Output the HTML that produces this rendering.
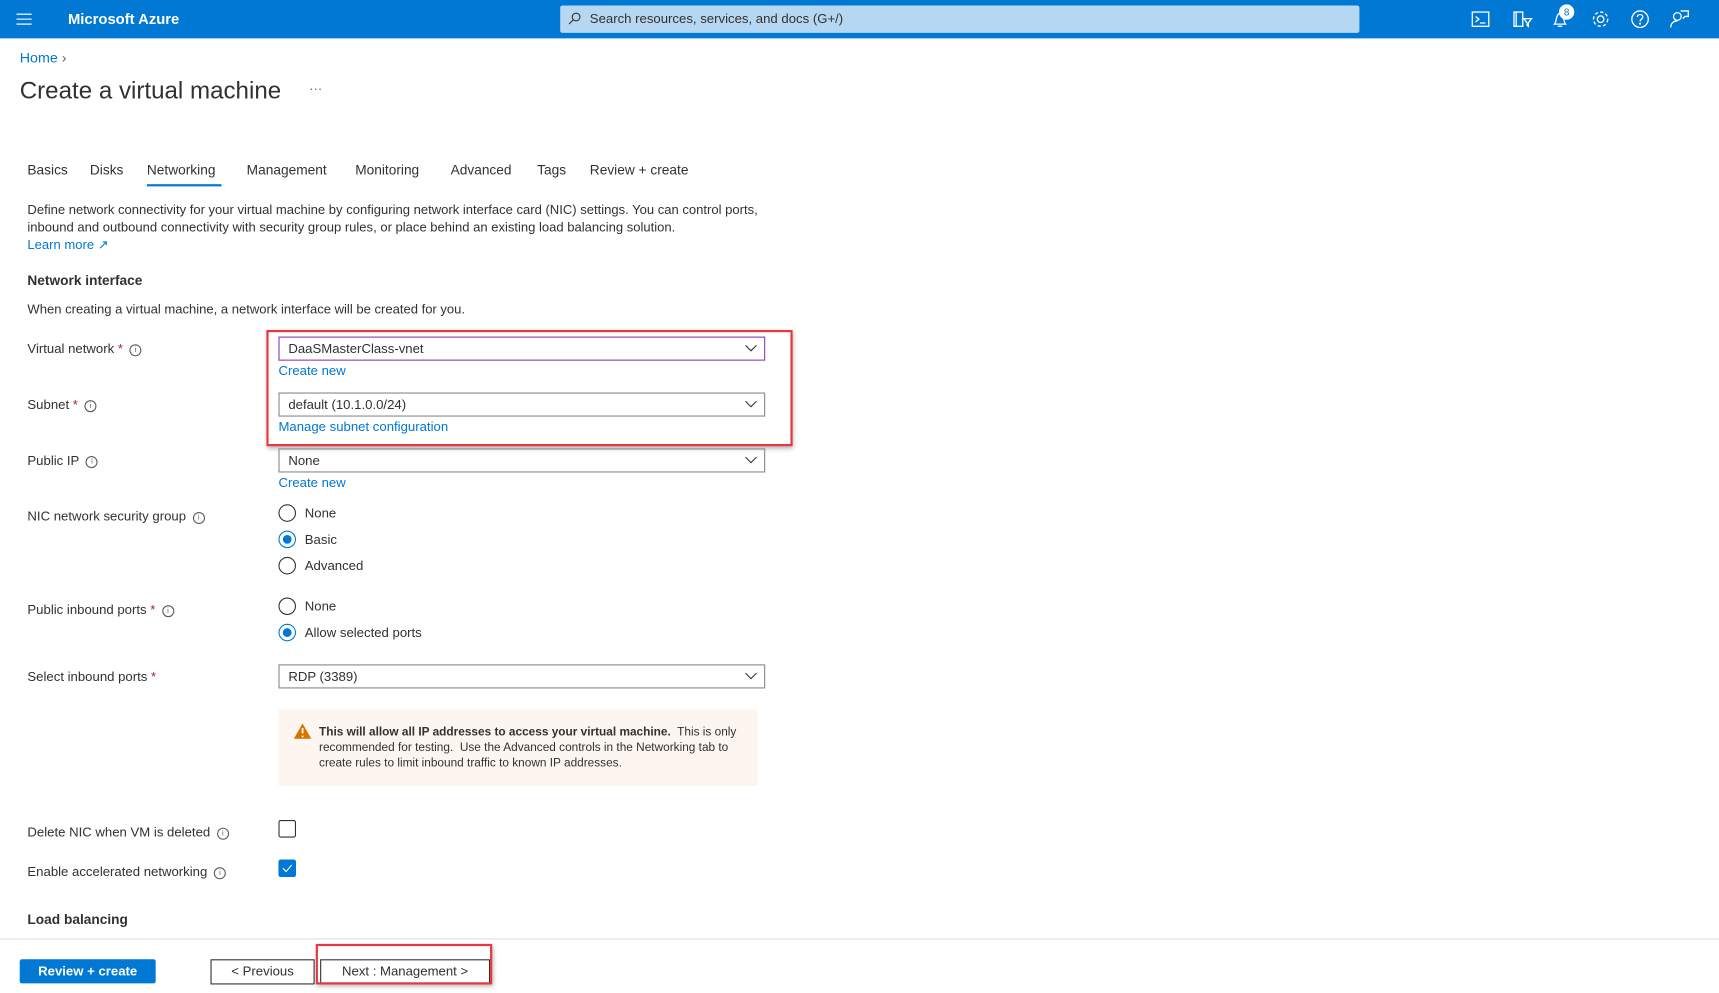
<!DOCTYPE html>
<html><head><meta charset="utf-8"><style>
html,body{margin:0;padding:0;width:1719px;height:993px;overflow:hidden;background:#fff}
#w{position:absolute;left:0;top:0;width:1568px;height:906px;transform:scale(1.0963);transform-origin:0 0;font-family:"Liberation Sans",sans-serif;color:#323130}
.a{position:absolute;white-space:nowrap}
.lbl{font-size:12px}
.lnk{color:#0078d4;font-size:12px}
.dd{position:absolute;left:254px;width:442px;height:20px;border:1px solid #8a8886;font-size:12px;line-height:20px;box-sizing:content-box}
.dd span{position:absolute;left:8px}
.dd svg{position:absolute;right:6px;top:6px}
.rad{position:absolute;left:254px;width:14px;height:14px;border:1px solid #323130;border-radius:50%}
.rad.on{border-color:#0078d4}
.rad.on::after{content:"";position:absolute;left:3px;top:3px;width:8px;height:8px;border-radius:50%;background:#0078d4}
.info{display:inline-block;width:9px;height:9px;border:1px solid #605e5c;border-radius:50%;font-size:7px;line-height:9px;text-align:center;color:#605e5c;vertical-align:1px;margin-left:6px}
.req{color:#a4262c}
</style></head><body><div id="w">
<div class="a" style="left:0;top:0;width:1568px;height:35px;background:#0078d4"></div>
<svg class="a" style="left:15px;top:12px" width="14" height="11"><path d="M0 1h14M0 5.5h14M0 10h14" stroke="#cfe4f7" stroke-width="1.3"/></svg>
<div class="a" style="left:62px;top:10px;color:#fff;font-size:13.5px;font-weight:bold">Microsoft Azure</div>
<div class="a" style="left:511px;top:5px;width:729px;height:25px;background:#b6d7f2;border-radius:2px"></div>
<svg class="a" style="left:518px;top:11px" width="12" height="12"><circle cx="7.5" cy="4.5" r="3.5" fill="none" stroke="#323130"/><path d="M5 7L1 11" stroke="#323130"/></svg>
<div class="a" style="left:538px;top:10px;font-size:12px;color:#323130">Search resources, services, and docs (G+/)</div>
<svg class="a" style="left:1340px;top:6px" width="210" height="24" fill="none" stroke="#fff" stroke-width="1.2">
<rect x="3" y="5" width="15" height="13"/><path d="M6 9l3 2.5-3 2.5M10 15h5"/>
<path d="M41 5h8v13h-8zM43 5v13M50 11h7l-3 4v3l-1-1v-2z"/>
<path d="M78 16c2-2 1-9 5-10 4 1 3 8 5 10zM81 18h4"/>
<circle cx="120" cy="11.5" r="3"/><circle cx="120" cy="11.5" r="6.5" stroke-dasharray="3 2"/>
<circle cx="156" cy="11.5" r="7.5"/><path d="M153.5 9.5c0-3 5-3 5 0 0 2-2.5 2-2.5 4"/><circle cx="156" cy="15.5" r=".4"/>
<circle cx="190" cy="9" r="3.5"/><path d="M184 19c0-4 3-6 6-6M193 4h7v5h-3l-2 2"/>
</svg>
<div class="a" style="left:1422px;top:4px;width:14px;height:14px;border-radius:50%;background:#fff;color:#0078d4;font-size:9px;text-align:center;line-height:14px">8</div>
<div class="a lnk" style="left:18px;top:45px;font-size:13px">Home <span style="color:#605e5c">&#8250;</span></div>
<div class="a" style="left:18px;top:70px;font-size:22px">Create a virtual machine</div>
<div class="a" style="left:282px;top:74px;font-size:12px;color:#605e5c">···</div>
<div class="a" style="left:25px;top:148px;font-size:12.5px">
<span style="position:absolute;left:0">Basics</span><span style="position:absolute;left:57px">Disks</span><span style="position:absolute;left:109px">Networking</span><span style="position:absolute;left:200px">Management</span><span style="position:absolute;left:299px">Monitoring</span><span style="position:absolute;left:386px">Advanced</span><span style="position:absolute;left:465px">Tags</span><span style="position:absolute;left:513px">Review + create</span></div>
<div class="a" style="left:134px;top:168px;width:68px;height:2px;background:#0078d4"></div>
<div class="a lbl" style="left:25px;top:183px;font-size:11.9px;line-height:16px">Define network connectivity for your virtual machine by configuring network interface card (NIC) settings. You can control ports,<br>inbound and outbound connectivity with security group rules, or place behind an existing load balancing solution.<br><span style="color:#0078d4">Learn more &#8599;</span></div>
<div class="a" style="left:25px;top:249px;font-size:12.5px;font-weight:bold">Network interface</div>
<div class="a lbl" style="left:25px;top:275px;font-size:11.9px">When creating a virtual machine, a network interface will be created for you.</div>

<div class="a lbl" style="left:25px;top:311px">Virtual network <span class="req">*</span><span class="info">i</span></div>
<div class="dd" style="top:307px;border-color:#8a3ab9"><span>DaaSMasterClass-vnet</span><svg width="12" height="8"><path d="M1 1l5 5 5-5" fill="none" stroke="#323130"/></svg></div>
<div class="a lnk" style="left:254px;top:331px">Create new</div>
<div class="a lbl" style="left:25px;top:362px">Subnet <span class="req">*</span><span class="info">i</span></div>
<div class="dd" style="top:358px"><span>default (10.1.0.0/24)</span><svg width="12" height="8"><path d="M1 1l5 5 5-5" fill="none" stroke="#323130"/></svg></div>
<div class="a lnk" style="left:254px;top:382px">Manage subnet configuration</div>
<div class="a" style="left:243px;top:301px;width:476px;height:102px;border:2px solid #e8383d;box-shadow:1px 2px 4px rgba(0,0,0,.3)"></div>

<div class="a lbl" style="left:25px;top:413px">Public IP<span class="info">i</span></div>
<div class="dd" style="top:409px"><span>None</span><svg width="12" height="8"><path d="M1 1l5 5 5-5" fill="none" stroke="#323130"/></svg></div>
<div class="a lnk" style="left:254px;top:433px">Create new</div>

<div class="a lbl" style="left:25px;top:464px">NIC network security group<span class="info">i</span></div>
<div class="rad" style="top:460px"></div><div class="a lbl" style="left:278px;top:461px">None</div>
<div class="rad on" style="top:484px"></div><div class="a lbl" style="left:278px;top:485px">Basic</div>
<div class="rad" style="top:508px"></div><div class="a lbl" style="left:278px;top:509px">Advanced</div>

<div class="a lbl" style="left:25px;top:549px">Public inbound ports <span class="req">*</span><span class="info">i</span></div>
<div class="rad" style="top:545px"></div><div class="a lbl" style="left:278px;top:546px">None</div>
<div class="rad on" style="top:569px"></div><div class="a lbl" style="left:278px;top:570px">Allow selected ports</div>

<div class="a lbl" style="left:25px;top:610px">Select inbound ports <span class="req">*</span></div>
<div class="dd" style="top:606px"><span>RDP (3389)</span><svg width="12" height="8"><path d="M1 1l5 5 5-5" fill="none" stroke="#323130"/></svg></div>

<div class="a" style="left:254px;top:647px;width:437px;height:70px;background:#fdf6f0"></div>
<svg class="a" style="left:268px;top:660px" width="16" height="14"><path d="M8 0L16 14H0z" fill="#d47500"/><path d="M8 4v5M8 11v1.5" stroke="#fff" stroke-width="1.6"/></svg>
<div class="a" style="left:291px;top:661px;font-size:10.8px;line-height:14px"><b>This will allow all IP addresses to access your virtual machine.</b>&nbsp; This is only<br>recommended for testing.&nbsp; Use the Advanced controls in the Networking tab to<br>create rules to limit inbound traffic to known IP addresses.</div>

<div class="a lbl" style="left:25px;top:752px">Delete NIC when VM is deleted<span class="info">i</span></div>
<div class="a" style="left:254px;top:748px;width:14px;height:14px;border:1px solid #323130;border-radius:2px"></div>
<div class="a lbl" style="left:25px;top:788px">Enable accelerated networking<span class="info">i</span></div>
<div class="a" style="left:254px;top:784px;width:16px;height:16px;background:#0078d4;border-radius:2px"></div>
<svg class="a" style="left:256px;top:787px" width="12" height="10"><path d="M2 5l3 3 5-6" fill="none" stroke="#fff"/></svg>
<div class="a" style="left:25px;top:832px;font-size:12.5px;font-weight:bold">Load balancing</div>

<div class="a" style="left:0;top:856px;width:1568px;height:1px;background:#e1dfdd"></div>
<div class="a" style="left:18px;top:875px;width:124px;height:22px;background:#0078d4;border-radius:2px;color:#fff;font-size:12px;font-weight:bold;text-align:center;line-height:22px">Review + create</div>
<div class="a" style="left:192px;top:875px;width:93px;height:21px;border:1px solid #323130;font-size:12px;text-align:center;line-height:21px">&lt; Previous</div>
<div class="a" style="left:292px;top:875px;width:153px;height:21px;border:1px solid #323130;font-size:12px;text-align:center;line-height:21px">Next : Management &gt;</div>
<div class="a" style="left:288px;top:861px;width:157px;height:33px;border:2px solid #e8383d;box-shadow:1px 2px 4px rgba(0,0,0,.3)"></div>
</div></body></html>
